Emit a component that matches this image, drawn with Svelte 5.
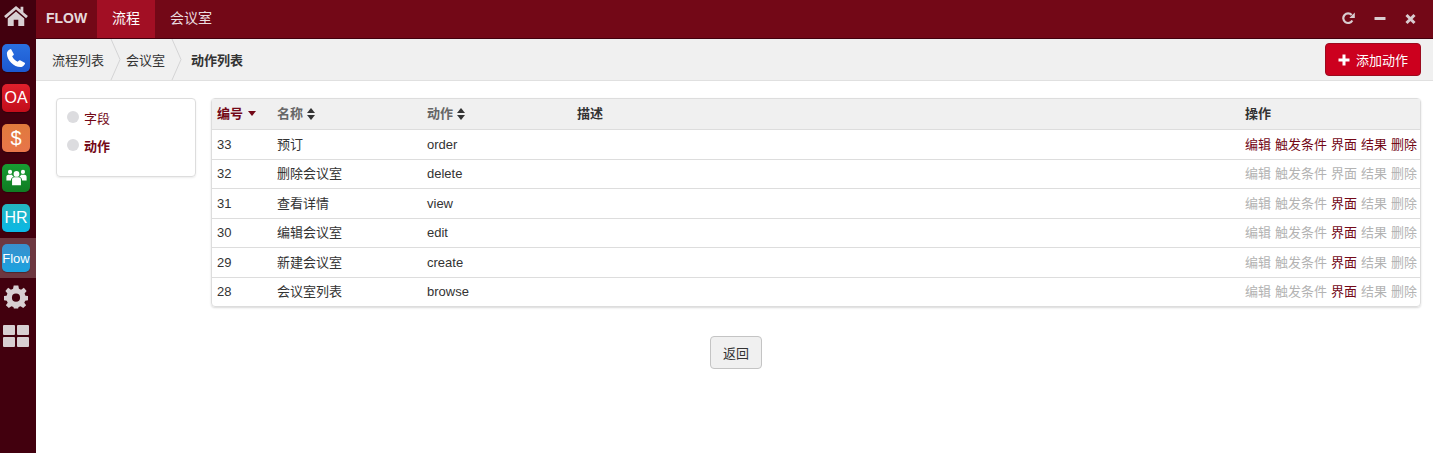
<script lang="ts">
	const apps = [
		{ label: 'OA', cls: 'oa' },
		{ label: '$', cls: 'money' }
	];
	const rows = [
		{ id: 33, name: '预订', action: 'order', on: ['编辑', '触发条件', '界面', '结果', '删除'] },
		{ id: 32, name: '删除会议室', action: 'delete', on: [] },
		{ id: 31, name: '查看详情', action: 'view', on: ['界面'] },
		{ id: 30, name: '编辑会议室', action: 'edit', on: ['界面'] },
		{ id: 29, name: '新建会议室', action: 'create', on: ['界面'] },
		{ id: 28, name: '会议室列表', action: 'browse', on: ['界面'] }
	];
	const ops = ['编辑', '触发条件', '界面', '结果', '删除'];
</script>

<div class="page">
	<aside class="rail">
		<div class="rail-item home">
			<svg width="26" height="22" viewBox="0 0 28 24">
				<path d="M14 1 L1 12 L3 14.500 L14 5 L25 14.500 L27 12 L22 7.800 V2 H19 V5.200 Z" fill="#d8cfd2" />
				<path d="M14 7 L5 14.800 V23 H11.500 V16 H16.500 V23 H23 V14.800 Z" fill="#d8cfd2" />
			</svg>
		</div>
		<div class="rail-item">
			<div class="tile phone">
				<svg width="20" height="20" viewBox="0 0 22 22">
					<path d="M5.500 1 L8.500 6.500 C8.800 7.200 8.500 7.700 8 8.100 L6.800 9.200 C7.800 11.700 10.300 14.200 12.800 15.200 L14 14 C14.400 13.500 14.900 13.300 15.500 13.600 L21 16.500 C20.800 18.500 18.500 21 16 21 C8.500 21 1 13.500 1 6 C1 3.500 3.500 1.200 5.500 1 Z" fill="#fff" />
				</svg>
			</div>
		</div>
		{#each apps as app}
			<div class="rail-item">
				<div class="tile {app.cls}">{app.label}</div>
			</div>
		{/each}
		<div class="rail-item">
			<div class="tile group">
				<svg width="21" height="18" viewBox="0 0 26 22">
					<g fill="#fff">
						<circle cx="13" cy="6" r="3.600" />
						<circle cx="5" cy="3.500" r="2.600" />
						<circle cx="21" cy="3.500" r="2.600" />
						<path d="M7.500 20 V13 C7.500 11 9 10 10.500 10 H15.500 C17 10 18.500 11 18.500 13 V20 Z" />
						<path d="M0.500 14 V9.500 C0.500 8 1.800 7 3 7 H7.500 C8 8.300 8.500 8.800 9.500 9.500 C7.500 10 6.200 11.500 6 14 Z" />
						<path d="M25.500 14 V9.500 C25.500 8 24.200 7 23 7 H18.500 C18 8.300 17.500 8.800 16.500 9.500 C18.500 10 19.800 11.500 20 14 Z" />
					</g>
				</svg>
			</div>
		</div>
		<div class="rail-item">
			<div class="tile hr">HR</div>
		</div>
		<div class="rail-item active">
			<div class="tile flow">Flow</div>
		</div>
		<div class="rail-item gear">
			<svg width="24" height="25" viewBox="0 0 26 26">
				<path fill="#d8cfd2" fill-rule="evenodd" d="M10.500 1 H15.500 L16.200 4.500 L18.500 5.500 L21.500 3.500 L24.500 7 L22.300 9.800 L23.200 12 L26 12.500 V17 L23 17.500 L22 19.800 L24 22.500 L20.800 25.500 L18 23.500 L15.800 24.400 L15.300 26 H10.700 L10.200 24.400 L8 23.500 L5.200 25.500 L2 22.500 L4 19.800 L3 17.500 L0 17 V12.500 L2.800 12 L3.700 9.800 L1.500 7 L4.500 3.500 L7.500 5.500 L9.800 4.500 Z M13 9.800 A4.400 4.400 0 1 0 13 18.600 A4.400 4.400 0 1 0 13 9.800 Z" transform="translate(0 -1)" />
			</svg>
		</div>
		<div class="rail-item grid-row">
			<div class="grid-icon">
				<span></span><span></span><span></span><span></span>
			</div>
		</div>
	</aside>

	<div class="main">
		<nav class="topbar">
			<span class="brand">FLOW</span>
			<span class="tab current">流程</span>
			<span class="tab">会议室</span>
			<div class="win-icons">
				<svg width="13" height="13" viewBox="0 0 13 13">
					<path d="M10.300 8.500 A4.800 4.800 0 1 1 9.700 3" fill="none" stroke="#d9cdd0" stroke-width="2.200" />
					<path d="M12.800 0.500 V6 H7.300 Z" fill="#d9cdd0" />
				</svg>
				<svg width="12" height="13" viewBox="0 0 12 13">
					<rect x="0.500" y="5" width="11" height="3" rx="0.500" fill="#d9cdd0" />
				</svg>
				<svg width="11" height="13" viewBox="0 0 11 13">
					<path d="M1.500 3 L9.500 11 M9.500 3 L1.500 11" stroke="#d9cdd0" stroke-width="3" />
				</svg>
			</div>
		</nav>

		<div class="crumbs">
			<span class="crumb">流程列表</span>
			<svg class="sep" width="12" height="41" viewBox="0 0 12 41"><path d="M1 0 L10 20.500 L1 41" fill="none" stroke="#d4d4d5" /></svg>
			<span class="crumb">会议室</span>
			<svg class="sep" width="12" height="41" viewBox="0 0 12 41"><path d="M1 0 L10 20.500 L1 41" fill="none" stroke="#d4d4d5" /></svg>
			<span class="crumb strong">动作列表</span>
			<button class="add" type="button">
				<svg width="12" height="12" viewBox="0 0 12 12"><path d="M4.500 0.500 H7.500 V4.500 H11.500 V7.500 H7.500 V11.500 H4.500 V7.500 H0.500 V4.500 H4.500 Z" fill="#fff" /></svg>
				添加动作
			</button>
		</div>

		<div class="content">
			<div class="side-menu">
				<div class="side-item"><i></i>字段</div>
				<div class="side-item bold"><i></i>动作</div>
			</div>

			<div class="right">
				<table>
					<thead>
						<tr>
							<th class="c-id sorted">编号 <span class="caret"></span></th>
							<th class="c-name muted">名称 <span class="sort"></span></th>
							<th class="c-action muted">动作 <span class="sort"></span></th>
							<th>描述</th>
							<th class="c-ops">操作</th>
						</tr>
					</thead>
					<tbody>
						{#each rows as row}
							<tr>
								<td>{row.id}</td>
								<td>{row.name}</td>
								<td>{row.action}</td>
								<td></td>
								<td class="c-ops">
									{#each ops as op}
										<a href="#top" class:live={row.on.includes(op)} class:dark={row.id !== 33}>{op}</a>
									{/each}
								</td>
							</tr>
						{/each}
					</tbody>
				</table>
				<div class="back-row">
					<button class="back" type="button">返回</button>
				</div>
			</div>
		</div>
	</div>
</div>

<style>
	:global(body) {
		margin: 0;
		background: #fff;
	}

	.page {
		display: flex;
		height: 453px;
		overflow: hidden;
		font-family: 'Liberation Sans', 'Noto Sans CJK SC', sans-serif;
		font-size: 13px;
		color: #333;
	}

	.rail {
		width: 36px;
		flex: none;
		background: #42000e;
		display: flex;
		flex-direction: column;
	}

	.rail-item {
		height: 40px;
		flex: none;
		display: flex;
		align-items: center;
		padding-left: 2px;
		box-sizing: border-box;
	}

	.rail-item.home {
		height: 38px;
		padding-left: 3px;
		padding-bottom: 6px;
	}

	.rail-item.gear {
		padding-left: 4px;
		padding-bottom: 2px;
	}

	.rail-item.grid-row {
		padding-bottom: 4px;
	}

	.rail-item.active {
		background: #6d3740;
	}

	.tile {
		width: 28px;
		height: 28px;
		border-radius: 5px;
		color: #fff;
		font-size: 16px;
		display: flex;
		align-items: center;
		justify-content: center;
		box-shadow: 0 1px 1px rgba(0, 0, 0, 0.3);
	}

	.phone { background: linear-gradient(#2a70e0, #1c58d0); }
	.oa { background: linear-gradient(#e0202c, #c20d1a); }
	.money { background: linear-gradient(#e07a3c, #e8754a); font-size: 20px; }
	.group { background: linear-gradient(#179c32, #0f7c22); }
	.hr { background: linear-gradient(#25b5be, #0ab8e6); }
	.flow { background: linear-gradient(#3a8fcc, #1ba3e0); font-size: 13px; }

	.grid-icon {
		display: grid;
		grid-template-columns: 12px 12px;
		grid-auto-rows: 10px;
		gap: 2px;
		margin-left: 1px;
	}

	.grid-icon span {
		background: #d8cfd2;
		border-radius: 1px;
	}

	.main {
		flex: 1;
		min-width: 0;
		display: flex;
		flex-direction: column;
	}

	.topbar {
		height: 38px;
		flex: none;
		background: #730817;
		border-bottom: 1px solid #42000e;
		display: flex;
		align-items: stretch;
		color: #ecdfe1;
	}

	.brand {
		width: 61px;
		box-sizing: border-box;
		padding-left: 10px;
		font-size: 14px;
		font-weight: 700;
		line-height: 37px;
		color: #e6dadc;
	}

	.tab {
		padding: 0 15px;
		font-size: 14px;
		line-height: 36px;
	}

	.tab.current {
		width: 58px;
		box-sizing: border-box;
		text-align: center;
		padding: 0;
		background: #a20f24;
		color: #fff;
	}

	.win-icons {
		margin-left: auto;
		display: flex;
		align-items: center;
		gap: 19px;
		padding-right: 17px;
		padding-bottom: 1px;
	}

	.crumbs {
		height: 42px;
		flex: none;
		background: #f0f0f0;
		border-bottom: 1px solid #e0e0e0;
		display: flex;
		align-items: center;
		padding-left: 16px;
		padding-right: 12px;
		box-sizing: border-box;
	}

	.sep {
		margin: 0 4px 0 6px;
		flex: none;
	}

	.crumb.strong {
		font-weight: 700;
		margin-left: 4px;
	}

	.add {
		margin-left: auto;
		width: 96px;
		height: 33px;
		border: 1px solid #9c0a1e;
		border-radius: 4px;
		background: #cc001e;
		color: #fff;
		font: inherit;
		padding: 0;
		display: flex;
		align-items: center;
		justify-content: center;
		gap: 6px;
	}

	.content {
		flex: 1;
		display: flex;
		align-items: flex-start;
		padding: 17px 12px 0 20px;
	}

	.side-menu {
		width: 140px;
		height: 79px;
		flex: none;
		box-sizing: border-box;
		border: 1px solid #ddd;
		border-radius: 4px;
		box-shadow: 0 1px 2px rgba(0, 0, 0, 0.08);
		padding: 4px 10px;
		margin-right: 15px;
	}

	.side-item {
		height: 28px;
		display: flex;
		align-items: center;
		gap: 5px;
		color: #730817;
	}

	.side-item i {
		width: 12px;
		height: 12px;
		border-radius: 50%;
		background: #dcdcdf;
	}

	.side-item.bold {
		font-weight: 700;
	}

	.right {
		flex: 1;
		min-width: 0;
	}

	table {
		width: 100%;
		table-layout: fixed;
		border-collapse: separate;
		border-spacing: 0;
		border: 1px solid #ddd;
		border-radius: 4px;
		box-shadow: 0 1px 2px rgba(0, 0, 0, 0.15);
		line-height: 18px;
	}

	th {
		height: 31px;
		box-sizing: border-box;
		background: #f0f0f0;
		text-align: left;
		padding: 0 5px;
		font-weight: 700;
		border-bottom: 1px solid #ddd;
	}

	th.c-id { width: 60px; color: #730817; }
	th.c-name, th.c-action { width: 150px; }
	th.c-ops { width: 180px; }
	th.muted { color: #666; }

	td {
		height: 29.500px;
		box-sizing: border-box;
		padding: 1px 5px 0;
		border-bottom: 1px solid #ddd;
		white-space: nowrap;
		overflow: hidden;
	}

	tbody tr:last-child td {
		height: 28.500px;
		border-bottom: none;
	}

	.c-ops a {
		text-decoration: none;
		margin-right: 4px;
		color: #730817;
	}

	.c-ops a.dark {
		color: #b3b3b3;
	}

	.c-ops a.dark.live {
		color: #730817;
	}

	.caret {
		display: inline-block;
		border: 4.500px solid transparent;
		border-top: 5px solid #730817;
		border-bottom: 0;
		vertical-align: 2px;
		margin-left: 1px;
	}

	.sort {
		display: inline-block;
		position: relative;
		width: 9px;
		height: 12px;
		vertical-align: -2px;
	}

	.sort::before,
	.sort::after {
		content: '';
		position: absolute;
		left: 0;
		border: 4.500px solid transparent;
	}

	.sort::before {
		top: 0;
		border-top: 0;
		border-bottom: 5px solid #333;
	}

	.sort::after {
		bottom: 0;
		border-bottom: 0;
		border-top: 5px solid #333;
	}

	.back-row {
		display: flex;
		justify-content: center;
		padding-top: 29px;
		padding-right: 160px;
	}

	.back {
		width: 52px;
		height: 33px;
		border: 1px solid #c4c4c4;
		border-radius: 4px;
		background: #f0f0f0;
		color: #333;
		font: inherit;
		padding: 0;
	}
</style>
